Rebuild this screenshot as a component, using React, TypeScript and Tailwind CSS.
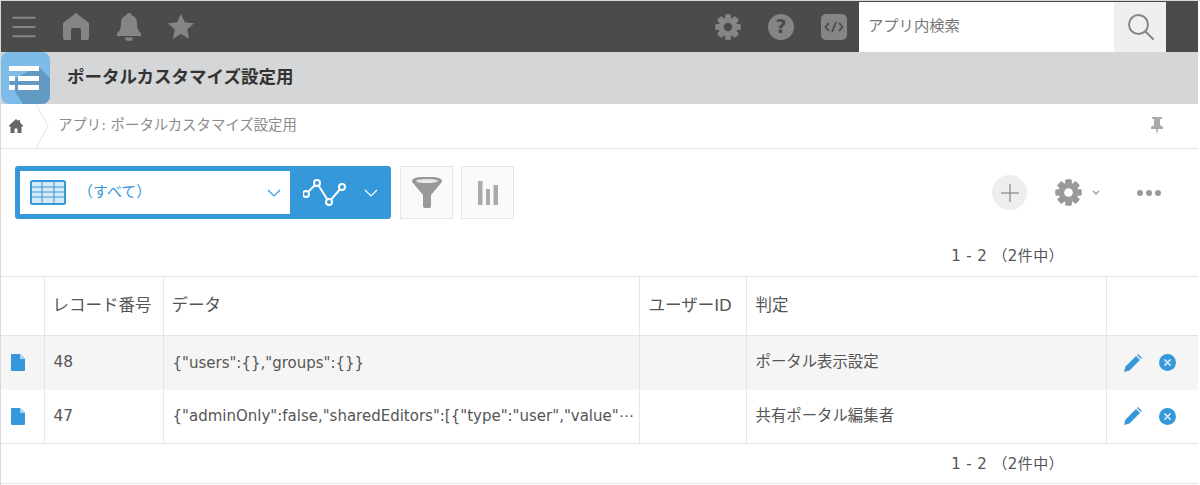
import { Menu } from "lucide-react";

const font = "font-['DejaVu_Sans','Noto_Sans_CJK_JP',sans-serif]";

function Gear({ className }: { className: string }) {
  const teeth = [0, 45, 90, 135, 180, 225, 270, 315];
  return (
    <svg viewBox="0 0 26 26" className={className} fill="currentColor">
      {teeth.map((a) => (
        <rect key={a} x="10" y="0.5" width="6" height="25" rx="1" transform={`rotate(${a} 13 13)`} />
      ))}
      <circle cx="13" cy="13" r="9.5" />
      <circle cx="13" cy="13" r="4.2" className="text-[#4b4b4b]" fill="currentColor" />
    </svg>
  );
}

function FileIcon() {
  return (
    <svg viewBox="0 0 14 17" className="h-[17px] w-[14px]">
      <path d="M0 1a1 1 0 0 1 1-1h8l5 5v11a1 1 0 0 1-1 1H1a1 1 0 0 1-1-1z" fill="#3498db" />
      <path d="M9 0l5 5H9z" fill="#a9d3ef" />
    </svg>
  );
}

function RowActions() {
  return (
    <div className="flex items-center gap-[17px] pl-[17px]">
      <svg viewBox="0 0 18 18" className="h-[18px] w-[18px]" fill="#3498db">
        <path d="M0 18l1.500-5.500L12 2l4 4L5.500 16.500z" />
        <path d="M13 1l1-1 4 4-1 1z" />
      </svg>
      <div className="flex h-[17px] w-[17px] items-center justify-center rounded-full bg-[#3498db]">
        <svg viewBox="0 0 8 8" className="h-[7px] w-[7px]" stroke="#d6e9f7" strokeWidth="1.800" strokeLinecap="round">
          <path d="M1 1l6 6M7 1L1 7" />
        </svg>
      </div>
    </div>
  );
}

const cell = "border-r border-[#e6e6e6] px-[9px] text-left align-middle font-normal";
const head = `${cell} pb-[0px] text-[16.500px]`;
const body = `${cell} text-[15.400px]`;
const json = `${cell} whitespace-nowrap text-[15px]`;

function Pager() {
  return <span className="text-[15px] tracking-[0.4px] text-[#555]">1 - 2 （2件中）</span>;
}

export default function App() {
  return (
    <div className={`${font} flex h-[485px] w-[1200px] flex-col overflow-hidden border-t border-l border-[#d9d9d9] bg-white pr-[2px]`}>
      <header className="flex h-[51px] shrink-0 items-center bg-[#4b4b4b] text-[#858585]">
        <div className="flex w-[45px] justify-center">
          <Menu className="h-[32px] w-[32px]" strokeWidth={1.500} absoluteStrokeWidth />
        </div>
        <div className="flex w-[60px] justify-center">
          <svg viewBox="0 0 26 27" className="h-[27px] w-[26px]" fill="currentColor">
            <path d="M13 0L0 10v15a2 2 0 0 0 2 2h6V17a2 2 0 0 1 2-2h6a2 2 0 0 1 2 2v10h6a2 2 0 0 0 2-2V10z" />
          </svg>
        </div>
        <div className="flex w-[45px] justify-center">
          <svg viewBox="0 0 24 28" className="h-[28px] w-[24px]" fill="currentColor">
            <path d="M12 0a3 3 0 0 1 3 2.500c3.500 1 5 4 5 7.500 0 5 1 8 4 10.500V23H0v-2.500C3 18 4 15 4 10c0-3.500 1.500-6.500 5-7.500A3 3 0 0 1 12 0z" />
            <path d="M8 24.500h8a4 3.500 0 0 1-8 0z" />
          </svg>
        </div>
        <div className="flex w-[60px] justify-center">
          <svg viewBox="0 0 26 25" className="h-[25px] w-[26px]" fill="currentColor">
            <path d="M13 0l3.800 8.300 9.200 1-6.800 6.200 1.900 9.300L13 20l-8.100 4.800 1.900-9.300L0 9.300l9.200-1z" />
          </svg>
        </div>
        <div className="ml-auto flex items-center">
          <Gear className="h-[26px] w-[26px]" />
          <div className="ml-[27px] flex h-[26px] w-[26px] items-center justify-center rounded-full bg-[#858585] text-[19px] font-bold text-[#4b4b4b]">?</div>
          <div className="ml-[27px] flex h-[26px] w-[26px] items-center justify-center rounded-[5px] bg-[#858585] text-[#4b4b4b]">
            <svg viewBox="0 0 20 12" className="h-[12px] w-[20px]" fill="none" stroke="currentColor" strokeWidth="1.800">
              <path d="M5 2L1.500 6 5 10M15 2l3.500 4L15 10M12 1L8 11" />
            </svg>
          </div>
        </div>
        <div className="ml-[12px] flex h-[50px] w-[255px] items-center bg-white pl-[9px] text-[15.300px] text-[#777]">アプリ内検索</div>
        <div className="flex h-[50px] w-[52px] items-center justify-center bg-[#efefef]">
          <svg viewBox="0 0 27 27" className="h-[27px] w-[27px]" fill="none" stroke="#858585" strokeWidth="2">
            <circle cx="11.500" cy="11.500" r="9.500" />
            <path d="M18.500 18.500L26 26" strokeLinecap="round" />
          </svg>
        </div>
        <div className="w-[32px] shrink-0" />
      </header>

      <div className="flex h-[52px] shrink-0 items-center bg-[#d4d6d7]">
        <div className="relative flex h-[52px] w-[49px] items-center justify-center overflow-hidden rounded-[8px] bg-[#7dbce8]">
          <svg viewBox="0 0 49 52" className="absolute inset-0 h-[52px] w-[49px]">
            <path d="M8 30L37 14l12 12v26H22z" fill="#5a8fb8" fillOpacity="0.75" />
            <g fill="#fff">
              <rect x="8" y="14" width="30" height="5" />
              <rect x="8" y="24" width="6" height="5" />
              <rect x="17" y="24" width="21" height="5" />
              <rect x="8" y="33" width="6" height="5" />
              <rect x="17" y="33" width="21" height="5" />
            </g>
          </svg>
        </div>
        <h1 className="ml-[17px] pb-[2px] text-[17.500px] font-bold text-[#333]">ポータルカスタマイズ設定用</h1>
      </div>

      <div className="flex h-[45px] shrink-0 items-center border-b border-[#e3e3e3]">
        <svg viewBox="0 0 14 14" className="ml-[8px] h-[14px] w-[14px]" fill="#666">
          <path d="M7 0l2.500 2.200V1H11v2.600L14 6.500v1h-1.500V14H8.500V9.500h-3V14H1.500V7.500H0v-1z" />
        </svg>
        <svg viewBox="0 0 14 44" className="ml-[13px] h-[44px] w-[14px]" fill="none" stroke="#e3e3e3">
          <path d="M0 0l12 22L0 44" />
        </svg>
        <span className="ml-[8px] text-[14.400px] text-[#8c8c8c]">アプリ: ポータルカスタマイズ設定用</span>
        <svg viewBox="0 0 12 18" className="ml-auto mr-[35px] h-[18px] w-[12px]" fill="#aaa">
          <path d="M1 0h10v2H9v6l3 2v2H7l-1 6-1-6H0v-2l3-2V2H1z" />
        </svg>
      </div>

      <div className="flex h-[89px] shrink-0 items-start pt-[17px] pl-[14px]">
        <div className="flex h-[53px] w-[376px] rounded-[3px] bg-[#3498db] p-[5px]">
          <div className="flex w-[270px] items-center bg-white pl-[10px]">
            <svg viewBox="0 0 36 25" className="h-[25px] w-[36px]" fill="#d6e9f7" stroke="#3498db">
              <rect x="1" y="1" width="34" height="23" rx="1.500" strokeWidth="2" />
              <path d="M1 7h34M1 12h34M1 17h34M12 1v23M24 1v23" strokeWidth="1" />
            </svg>
            <span className="ml-[12px] pb-[1px] text-[15px] text-[#3498db]">（すべて）</span>
            <svg viewBox="0 0 14 8" className="ml-auto mr-[9px] h-[8px] w-[14px]" fill="none" stroke="#3498db" strokeWidth="1.200">
              <path d="M1 1l6 6 6-6" />
            </svg>
          </div>
          <div className="flex flex-1 items-center pl-[13px]">
            <svg viewBox="0 0 44 27" className="h-[27px] w-[44px]" fill="#3498db" stroke="#fff" strokeWidth="2">
              <path d="M3 15L14 4l12 19L39 8" fill="none" />
              <circle cx="3" cy="15" r="3" />
              <circle cx="14" cy="4" r="3" />
              <circle cx="26" cy="23" r="3" />
              <circle cx="39" cy="8" r="3" />
            </svg>
            <svg viewBox="0 0 14 8" className="ml-[17px] h-[8px] w-[14px]" fill="none" stroke="#fff" strokeWidth="1.200">
              <path d="M1 1l6 6 6-6" />
            </svg>
          </div>
        </div>
        <div className="ml-[9px] flex h-[53px] w-[53px] items-center justify-center border border-[#e6e6e6] bg-[#fafafa]">
          <svg viewBox="0 0 32 31" className="h-[31px] w-[32px]" fill="#999">
            <path d="M1 4c0-6 30-6 30 0 0 1-1 2-1 2L20 18v11a2 2 0 0 1-2 2h-4a2 2 0 0 1-2-2V18L2 6S1 5 1 4z" />
            <ellipse cx="16" cy="4" rx="11" ry="2" fill="#e8e8e8" />
          </svg>
        </div>
        <div className="ml-[8px] flex h-[53px] w-[53px] items-center justify-center border border-[#e6e6e6] bg-[#fafafa]">
          <svg viewBox="0 0 20 24" className="h-[24px] w-[20px]" fill="#aaa">
            <rect x="0" y="0" width="4.500" height="24" />
            <rect x="8" y="8" width="4" height="16" />
            <rect x="15.500" y="4" width="4.500" height="20" />
          </svg>
        </div>
        <div className="ml-auto flex h-[53px] items-center pr-[37px]">
          <div className="flex h-[35px] w-[35px] items-center justify-center rounded-full bg-[#eeeeee]">
            <svg viewBox="0 0 18 18" className="h-[18px] w-[18px]" stroke="#999" strokeWidth="1.500">
              <path d="M9 0v18M0 9h18" />
            </svg>
          </div>
          <Gear className="ml-[28px] h-[27px] w-[27px] text-[#999] [&_circle:last-child]:text-white" />
          <svg viewBox="0 0 8 5" className="ml-[10px] h-[5px] w-[8px]" fill="none" stroke="#999" strokeWidth="1.300">
            <path d="M1 1l3 3 3-3" />
          </svg>
          <div className="ml-[37px] flex gap-[3px]">
            <span className="h-[6px] w-[6px] rounded-full bg-[#999]" />
            <span className="h-[6px] w-[6px] rounded-full bg-[#999]" />
            <span className="h-[6px] w-[6px] rounded-full bg-[#999]" />
          </div>
        </div>
      </div>

      <div className="flex h-[38px] shrink-0 items-start justify-end pt-[7px] pr-[134px]">
        <Pager />
      </div>

      <table className="w-full shrink-0 table-fixed border-collapse border-y border-[#e3e3e3] text-[#555]">
        <colgroup>
          <col className="w-[43px]" />
          <col className="w-[119px]" />
          <col className="w-[476px]" />
          <col className="w-[107px]" />
          <col className="w-[360px]" />
          <col />
        </colgroup>
        <thead>
          <tr className="h-[59px] border-b border-[#e3e3e3]">
            <th className={head} />
            <th className={`${head} pl-[8px]`}>レコード番号</th>
            <th className={`${head} pl-[8px]`}>データ</th>
            <th className={head}>ユーザーID</th>
            <th className={head}>判定</th>
            <th className="font-normal" />
          </tr>
        </thead>
        <tbody>
          <tr className="h-[54px] bg-[#f5f5f5]">
            <td className={`${body} pl-[10px]`}><FileIcon /></td>
            <td className={body}>48</td>
            <td className={json}>{'{"users":{},"groups":{}}'}</td>
            <td className={body} />
            <td className={body}>ポータル表示設定</td>
            <td><RowActions /></td>
          </tr>
          <tr className="h-[54px]">
            <td className={`${body} pl-[10px]`}><FileIcon /></td>
            <td className={body}>47</td>
            <td className={json}>{'{"adminOnly":false,"sharedEditors":[{"type":"user","value"⋯'}</td>
            <td className={body} />
            <td className={body}>共有ポータル編集者</td>
            <td><RowActions /></td>
          </tr>
        </tbody>
      </table>

      <div className="flex h-[40px] shrink-0 items-center justify-end border-b border-[#e3e3e3] pt-[2px] pr-[134px]">
        <Pager />
      </div>
    </div>
  );
}
